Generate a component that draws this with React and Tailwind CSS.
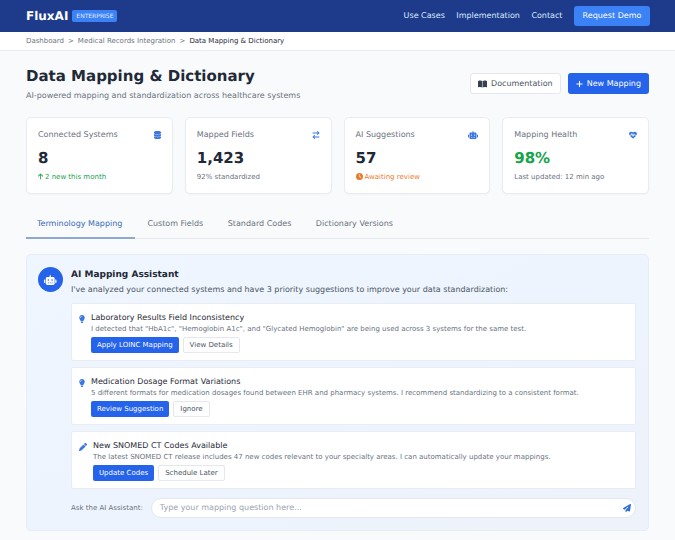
import React from "react";
import { FaDatabase, FaArrowRightArrowLeft, FaRobot, FaHeartPulse, FaArrowUp, FaClock, FaBookOpen, FaPlus, FaLightbulb, FaPen, FaPaperPlane } from "react-icons/fa6";

function Stat({ label, icon, value, valueClass, sub }) {
  return (
    <div className="bg-white border border-[#e9ecf0] rounded-[5px] px-[11px] pt-[10.5px] h-[77px] shadow-[0_1px_2px_rgba(0,0,0,0.03)]">
      <div className="flex justify-between items-center h-[13px]">
        <span className="text-[8px] text-[#6b7280]">{label}</span>
        {icon}
      </div>
      <div className={`text-[15px] font-bold leading-[18px] mt-[7px] ${valueClass}`}>{value}</div>
      <div className="mt-[5px] leading-[10px] text-[7px]">{sub}</div>
    </div>
  );
}

function Suggestion({ icon, title, text, primary, secondary }) {
  return (
    <div className="bg-white border border-[#e9ecf0] rounded-[2px] h-[58px] pl-[7px] flex gap-[6px]">
      {icon}
      <div className="pt-[8px]">
        <div className="text-[8px] text-[#1f2937] leading-[11px]">{title}</div>
        <div className="text-[7px] text-[#6b7280] leading-[10px] mt-[1px]">{text}</div>
        <div className="flex gap-[4px] mt-[3px]">
          <span className="h-[16px] px-[6px] flex items-center bg-[#2563eb] text-white text-[7px] rounded-[2px]">{primary}</span>
          <span className="h-[16px] px-[6px] flex items-center bg-white border border-[#e5e7eb] text-[#4b5563] text-[7px] rounded-[2px]">{secondary}</span>
        </div>
      </div>
    </div>
  );
}

export default function App() {
  return (
    <div className="w-[675px] h-[540px] overflow-hidden bg-[#f8fafc] font-['DejaVu_Sans',sans-serif] [text-rendering:geometricPrecision]">
      <header className="h-[32px] bg-[#1e3a8a] flex items-center justify-between pl-[26px] pr-[25px]">
        <div className="flex items-center gap-[4px]">
          <span className="text-white font-bold text-[12px]">FluxAI</span>
          <span className="bg-[#3b82f6] text-[#e5efff] text-[6px] h-[12px] px-[4px] rounded-[2px] flex items-center">ENTERPRISE</span>
        </div>
        <nav className="flex items-center gap-[11.5px] text-[8px] text-[#dbeafe]">
          <span>Use Cases</span>
          <span>Implementation</span>
          <span>Contact</span>
          <span className="bg-[#3b82f6] text-white h-[20px] w-[76px] flex items-center justify-center rounded-[3px]">Request Demo</span>
        </nav>
      </header>
      <div className="h-[19px] bg-white border-b border-[#e9ecf0] pl-[26px] flex items-center gap-[4px] text-[7px] text-[#6b7280]">
        <span>Dashboard</span><span>&gt;</span><span>Medical Records Integration</span><span>&gt;</span><span className="text-[#1f2937]">Data Mapping &amp; Dictionary</span>
      </div>
      <main className="px-[26px]">
        <div className="flex justify-between items-start pt-[15px] h-[66px]">
          <div>
            <h1 className="text-[15px] font-bold text-[#1f2937] leading-[20px]">Data Mapping &amp; Dictionary</h1>
            <p className="text-[8px] text-[#6b7280] leading-[11px] mt-[4px]">AI-powered mapping and standardization across healthcare systems</p>
          </div>
          <div className="flex gap-[7px] mt-[7px]">
            <span className="h-[21px] px-[7px] bg-white border border-[#e5e7eb] rounded-[3px] text-[#4b5563] text-[8px] flex items-center gap-[4px]"><FaBookOpen className="text-[#374151] w-[9px] h-[8px]" />Documentation</span>
            <span className="h-[21px] px-[8px] bg-[#2563eb] rounded-[3px] text-white text-[8px] flex items-center gap-[4px]"><FaPlus className="w-[7px] h-[8px]" />New Mapping</span>
          </div>
        </div>
        <div className="grid grid-cols-4 gap-[12px]">
          <Stat label="Connected Systems" icon={<FaDatabase className="text-[#3b76e1] w-[7px] h-[8px]" />} value="8" valueClass="text-[#1f2937]" sub={<span className="text-[#16a34a] flex items-center gap-[2px]"><FaArrowUp className="w-[5px] h-[7px]" />2 new this month</span>} />
          <Stat label="Mapped Fields" icon={<FaArrowRightArrowLeft className="text-[#3b76e1] w-[8px] h-[8px]" />} value="1,423" valueClass="text-[#1f2937]" sub={<span className="text-[#6b7280]">92% standardized</span>} />
          <Stat label="AI Suggestions" icon={<FaRobot className="text-[#3b76e1] w-[10px] h-[8px]" />} value="57" valueClass="text-[#1f2937]" sub={<span className="text-[#ea7a2a] flex items-center gap-[2px]"><FaClock className="w-[7px] h-[7px]" />Awaiting review</span>} />
          <Stat label="Mapping Health" icon={<FaHeartPulse className="text-[#3b76e1] w-[8px] h-[8px]" />} value="98%" valueClass="text-[#16a34a]" sub={<span className="text-[#6b7280]">Last updated: 12 min ago</span>} />
        </div>
        <div className="flex h-[26px] mt-[19px] border-b border-[#e5e7eb] text-[8px] text-[#6b7280]">
          <span className="pl-[11px] pr-[13px] pb-[3px] border-b-2 border-[#8ea8cf] -mb-px text-[#3a6ab8] flex items-center h-[26px]">Terminology Mapping</span>
          <span className="ml-[1px] px-[11px] pb-[3px] flex items-center">Custom Fields</span>
          <span className="ml-[2.5px] px-[11px] pb-[3px] flex items-center">Standard Codes</span>
          <span className="ml-[2.5px] px-[11px] pb-[3px] flex items-center">Dictionary Versions</span>
        </div>
        <section className="mt-[15px] h-[277px] bg-gradient-to-br from-[#eff6ff] to-[#edf2fb] border border-[#e5edf8] rounded-[5px] pl-[11px] pr-[12px] pt-[12px]">
          <div className="flex gap-[8px]">
            <div className="w-[25px] h-[25px] rounded-full bg-[#2563eb] flex items-center justify-center shrink-0"><FaRobot className="text-white w-[12.5px] h-[10px]" /></div>
            <div className="pt-[1.5px]">
              <div className="text-[9px] font-bold text-[#1f2937] leading-[13px]">AI Mapping Assistant</div>
              <div className="text-[8px] text-[#4b5563] leading-[12px] mt-[2px]">I've analyzed your connected systems and have 3 priority suggestions to improve your data standardization:</div>
            </div>
          </div>
          <div className="ml-[33px] mt-[7.5px] flex flex-col gap-[6px]">
            <Suggestion icon={<FaLightbulb className="text-[#3b76e1] w-[6px] h-[8px] mt-[11px] shrink-0" />} title="Laboratory Results Field Inconsistency" text={'I detected that "HbA1c", "Hemoglobin A1c", and "Glycated Hemoglobin" are being used across 3 systems for the same test.'} primary="Apply LOINC Mapping" secondary="View Details" />
            <Suggestion icon={<FaLightbulb className="text-[#3b76e1] w-[6px] h-[8px] mt-[11px] shrink-0" />} title="Medication Dosage Format Variations" text="5 different formats for medication dosages found between EHR and pharmacy systems. I recommend standardizing to a consistent format." primary="Review Suggestion" secondary="Ignore" />
            <Suggestion icon={<FaPen className="text-[#3b76e1] w-[8px] h-[8px] mt-[11px] shrink-0" />} title="New SNOMED CT Codes Available" text="The latest SNOMED CT release includes 47 new codes relevant to your specialty areas. I can automatically update your mappings." primary="Update Codes" secondary="Schedule Later" />
          </div>
          <div className="ml-[33px] mt-[9px] flex items-center gap-[8px]">
            <span className="text-[7px] text-[#6b7280] whitespace-nowrap">Ask the AI Assistant:</span>
            <div className="flex-1 h-[20px] bg-white border border-[#e5e7eb] rounded-full flex items-center justify-between pl-[8px] pr-[4px]">
              <span className="text-[8px] text-[#9ca3af]">Type your mapping question here...</span>
              <FaPaperPlane className="text-[#2f6fdb] w-[8px] h-[8px]" />
            </div>
          </div>
        </section>
      </main>
    </div>
  );
}
